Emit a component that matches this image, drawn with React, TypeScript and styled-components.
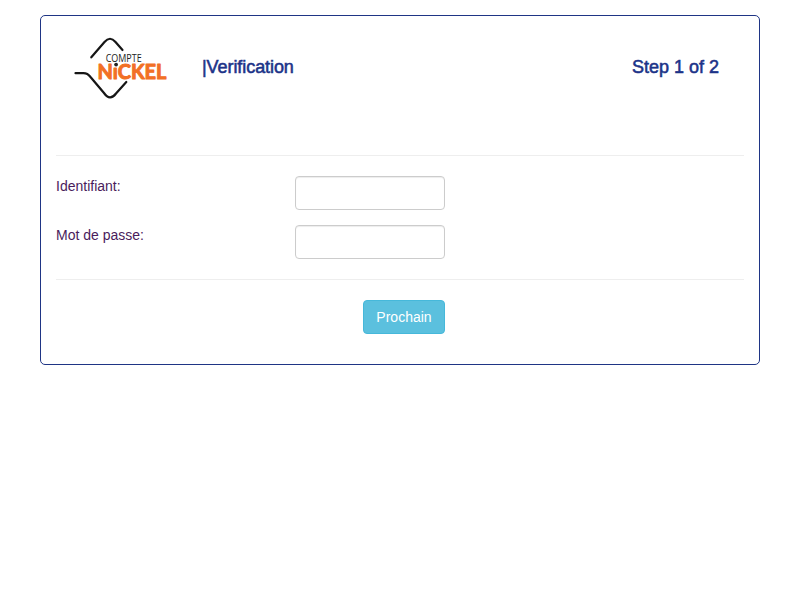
import React from 'react';
import styled, { createGlobalStyle } from 'styled-components';

const GlobalStyle = createGlobalStyle`
  *, *::before, *::after { box-sizing: border-box; }
  body {
    margin: 0;
    background: #fff;
    color: #4a1c5c;
    font-family: "Liberation Sans", Arial, sans-serif;
    font-size: 14px;
    line-height: 20px;
  }
`;

const Panel = styled.main`
  width: 720px;
  height: 350px;
  margin: 15px auto 0;
  padding: 0 15px;
  border: 1px solid #1f3585;
  border-radius: 5px;
`;

const Header = styled.header`
  display: flex;
  height: 139px;
  padding: 18px 25px 0 14px;
`;

const Logo = styled.svg`
  display: block;
  width: 100px;
  height: 70px;
  flex: none;
  overflow: visible;
`;

const LogoCaption = styled.text`
  fill: #222;
  font: 400 11.5px "Open Sans", sans-serif;
`;

const LogoName = styled.text`
  fill: #f27025;
  stroke: #f27025;
  stroke-width: 1;
  stroke-linejoin: round;
  font: 700 20.5px Lato, sans-serif;
`;

const Title = styled.h1`
  margin: 23px 0 0 32px;
  color: #1c3388;
  font-size: 18px;
  line-height: 20px;
  font-weight: 500;
  letter-spacing: -0.07px;
  -webkit-text-stroke: 0.55px #1c3388;
`;

const Step = styled(Title)`
  margin-left: auto;
  letter-spacing: 0;
`;

const Divider = styled.hr`
  height: 1px;
  margin: 0 0 20px;
  border: 0;
  background: #eee;
`;

const Field = styled.div`
  display: grid;
  grid-template-columns: 239px 150px;
  height: 34px;
  margin-bottom: 15px;
`;

const Label = styled.label`
  display: block;
`;

const Input = styled.input`
  width: 150px;
  height: 34px;
  padding: 6px 12px;
  border: 1px solid #ccc;
  border-radius: 4px;
  background: #fff;
  font: inherit;
  box-shadow: inset 0 1px 1px rgba(0, 0, 0, 0.075);
`;

const Fields = styled.div`
  height: 103px;
`;

const Actions = styled.div`
  padding-left: 307px;
`;

const Button = styled.button`
  display: block;
  width: 82px;
  height: 34px;
  padding: 0;
  border: 1px solid #46b8da;
  border-radius: 4px;
  background: #5bc0de;
  color: #fff;
  font: inherit;
`;

export default function App() {
  return (
    <>
      <GlobalStyle />
      <Panel>
        <Header>
          <Logo viewBox="70 34 100 70" aria-label="Compte Nickel">
            <g fill="none" stroke="#161616" strokeWidth="2.2" strokeLinecap="round" strokeLinejoin="round">
              <path d="M91.3 57.3 L104.5 42 Q110 35.5 115.5 42 L122.5 50" />
              <path d="M75.5 73.2 H83 Q87.5 73 90.5 77 L104 93 Q110 101.5 116 93.5 L126.3 82" />
            </g>
            <LogoCaption x="105.7" y="61.6" textLength="36" lengthAdjust="spacingAndGlyphs">COMPTE</LogoCaption>
            <LogoName x="97.5" y="79.4" textLength="69" lengthAdjust="spacingAndGlyphs">NıCKEL</LogoName>
            <circle cx="116.1" cy="64.6" r="1.9" fill="#222" />
          </Logo>
          <Title>|Verification</Title>
          <Step as="div">Step 1 of 2</Step>
        </Header>
        <Divider />
        <Fields>
          <Field><Label htmlFor="identifier">Identifiant:</Label><Input id="identifier" /></Field>
          <Field><Label htmlFor="password">Mot de passe:</Label><Input id="password" type="password" /></Field>
        </Fields>
        <Divider />
        <Actions><Button>Prochain</Button></Actions>
      </Panel>
    </>
  );
}
